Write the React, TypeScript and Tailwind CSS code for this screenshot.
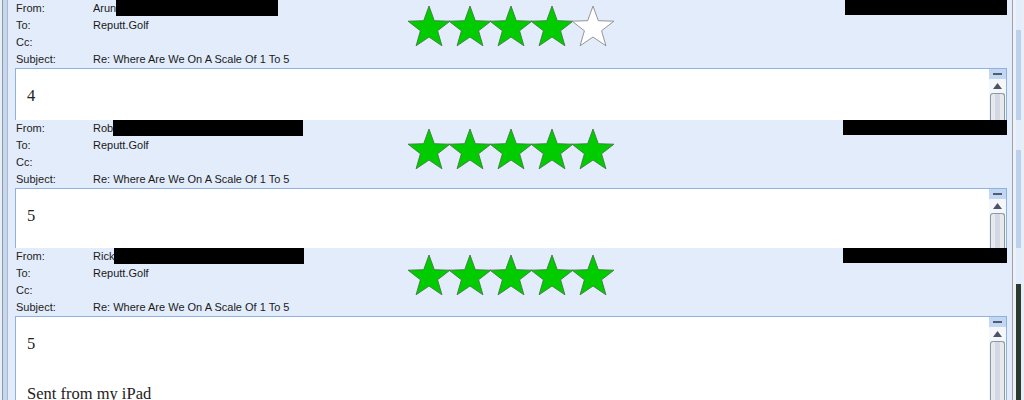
import React from "react";

const R = 22;
const INNER = 0.41;

function starPoints(cx: number, cy: number) {
  const pts: string[] = [];
  for (let i = 0; i < 10; i++) {
    const a = ((-90 + 36 * i) * Math.PI) / 180;
    const r = i % 2 === 0 ? R : R * INNER;
    pts.push(`${(cx + r * Math.cos(a)).toFixed(2)},${(cy + r * Math.sin(a)).toFixed(2)}`);
  }
  return pts.join(" ");
}

function Stars({ filled }: { filled: number }) {
  return (
    <svg width="212" height="46" viewBox="0 0 212 46">
      {[0, 1, 2, 3, 4].map((i) => (
        <polygon
          key={i}
          points={starPoints(22 + 41 * i, 23)}
          fill={i < filled ? "#00cc00" : "#ffffff"}
          stroke={i < filled ? "#3f7a3f" : "#8a8a8a"}
          strokeWidth="0.9"
          strokeLinejoin="miter"
        />
      ))}
    </svg>
  );
}

function Scrollbar() {
  return (
    <div className="flex w-[17px] shrink-0 flex-col bg-[#f4f6f9]">
      <div className="flex h-[10px] shrink-0 items-center justify-center bg-[#c4d7f1]">
        <div className="h-[2px] w-[9px] bg-[#4b5d79]" />
      </div>
      <div className="flex h-[14px] shrink-0 items-center justify-center">
        <svg width="9" height="6" viewBox="0 0 9 6">
          <polygon points="4.5,0 9,6 0,6" fill="#4a5466" />
        </svg>
      </div>
      <div className="mx-[1px] flex-1 rounded-t-[3px] border border-b-0 border-[#8d97a6] bg-[#e6e9ee] px-[3px]">
        <div className="mx-auto h-full w-[5px] bg-[#d2d9e3]" />
      </div>
    </div>
  );
}

type PanelProps = {
  heightClass: string;
  name: string;
  boxW: string;
  rightBoxW: string;
  filled: number;
  starTop: string;
  body: React.ReactNode;
  dark?: boolean;
};

function Row({ label, children }: { label: string; children?: React.ReactNode }) {
  return (
    <div className="flex h-[17px] shrink-0 items-center">
      <div className="w-[77px] shrink-0 pl-[1px] text-[#222]">{label}</div>
      <div className="flex flex-1 items-center text-[#1a1a1a]">{children}</div>
    </div>
  );
}

function Panel({ heightClass, name, boxW, rightBoxW, filled, starTop, body, dark }: PanelProps) {
  return (
    <div
      className={`relative flex shrink-0 overflow-hidden bg-[#e2ecfa] ${heightClass}`}
      style={{ fontFamily: '"Liberation Sans", Arial, sans-serif' }}
    >
      {/* left gutter */}
      <div className="flex w-[15px] shrink-0">
        <div className="w-[2px] bg-[#e9eef4]" />
        <div className="w-[1px] bg-[#8f98a5]" />
        <div className="w-[4px] bg-[#c6d8ef]" />
        <div className="w-[1px] bg-[#aab8ca]" />
        <div className="flex-1" />
      </div>

      {/* main column */}
      <div className="flex min-h-0 min-w-0 flex-1 flex-col text-[11px] leading-[13px]">
        <div className="flex h-[17px] shrink-0 items-start">
          <div className="flex h-[17px] w-[77px] shrink-0 items-center pl-[1px] text-[#222]">From:</div>
          <div className="flex h-[17px] items-center text-[#1a1a1a]">
            <span className="pl-[1px]">{name}</span>
          </div>
          <div className={`h-[16px] bg-black ${boxW}`} />
          <div className="flex-1" />
          <div className={`h-[15px] bg-black ${rightBoxW}`} />
        </div>
        <Row label="To:">
          <span className="pl-[1px]">Reputt.Golf</span>
        </Row>
        <Row label="Cc:" />
        <Row label="Subject:">
          <span className="pl-[1px]">Re: Where Are We On A Scale Of 1 To 5</span>
        </Row>
        <div className="flex min-h-0 flex-1 overflow-hidden border border-b-0 border-[#8db1e2] bg-white">
          <div
            className="flex-1 pl-[11px] pt-[17px] text-[16.5px] leading-[19px] text-[#222]"
            style={{ fontFamily: '"Liberation Serif", "Times New Roman", serif' }}
          >
            {body}
          </div>
          <Scrollbar />
        </div>
      </div>

      {/* right gutter */}
      <div className="flex w-[17px] shrink-0">
        <div className="w-[5px]" />
        <div className="w-[1px] bg-[#9aa3ae]" />
        <div className="w-[3px] bg-[#eef1f5]" />
        <div className="flex w-[5px] flex-col">
          <div className={`${dark ? "h-[36px]" : "h-[30px]"} bg-[#e2ecfa]`} />
          <div className={`flex-1 ${dark ? "bg-[#2c3a2f]" : "bg-[#bcd1ee]"}`} />
        </div>
        <div className="w-[3px] bg-[#e8eef6]" />
      </div>

      <div className={`absolute left-[407px] ${starTop}`}>
        <Stars filled={filled} />
      </div>
    </div>
  );
}

export default function App() {
  return (
    <div className="flex h-[400px] w-[1024px] flex-col overflow-hidden bg-white">
      <Panel
        heightClass="h-[120px]"
        name="Arun"
        boxW="w-[162px]"
        rightBoxW="w-[162px]"
        filled={4}
        starTop="top-[5px]"
        body={<p>4</p>}
      />
      <Panel
        heightClass="h-[128px]"
        name="Rob"
        boxW="w-[190px]"
        rightBoxW="w-[164px]"
        filled={5}
        starTop="top-[8px]"
        body={<p>5</p>}
      />
      <Panel
        heightClass="h-[152px]"
        name="Rick"
        boxW="w-[190px]"
        rightBoxW="w-[164px]"
        filled={5}
        starTop="top-[6px]"
        dark
        body={
          <>
            <p>5</p>
            <p className="mt-[31px]">Sent from my iPad</p>
          </>
        }
      />
    </div>
  );
}
